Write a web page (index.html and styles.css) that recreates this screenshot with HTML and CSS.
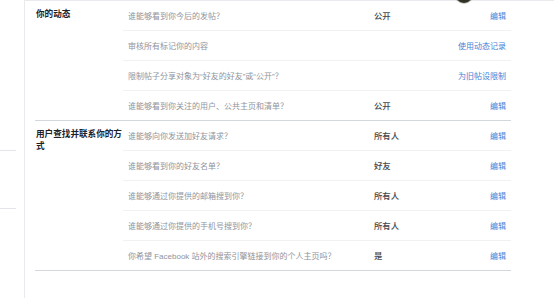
FILE: index.html
```html
<!DOCTYPE html>
<html lang="zh-CN">
<head>
<meta charset="utf-8">
<title>隐私设置</title>
<link rel="stylesheet" href="styles.css">
</head>
<body>
<div class="page">
  <aside class="side">
    <div class="side-sep"></div>
    <div class="side-sep"></div>
  </aside>
  <main class="content">
    <section class="group">
      <h3 class="g-title">你的动态</h3>
      <div class="rows">
        <div class="row"><span class="q">谁能够看到你今后的发帖？</span><span class="v">公开</span><a class="edit">编辑</a></div>
        <div class="row"><span class="q">审核所有标记你的内容</span><span class="v"></span><a class="edit">使用动态记录</a></div>
        <div class="row"><span class="q">限制帖子分享对象为“好友的好友”或“公开”？</span><span class="v"></span><a class="edit">为旧帖设限制</a></div>
        <div class="row"><span class="q">谁能够看到你关注的用户、公共主页和清单？</span><span class="v">公开</span><a class="edit">编辑</a></div>
      </div>
    </section>
    <section class="group">
      <h3 class="g-title">用户查找并联系你的方式</h3>
      <div class="rows">
        <div class="row"><span class="q">谁能够向你发送加好友请求？</span><span class="v">所有人</span><a class="edit">编辑</a></div>
        <div class="row"><span class="q">谁能够看到你的好友名单？</span><span class="v">好友</span><a class="edit">编辑</a></div>
        <div class="row"><span class="q">谁能够通过你提供的邮箱搜到你？</span><span class="v">所有人</span><a class="edit">编辑</a></div>
        <div class="row"><span class="q">谁能够通过你提供的手机号搜到你？</span><span class="v">所有人</span><a class="edit">编辑</a></div>
        <div class="row"><span class="q">你希望 Facebook 站外的搜索引擎链接到你的个人主页吗？</span><span class="v">是</span><a class="edit">编辑</a></div>
      </div>
    </section>
  </main>
  <span class="avatar"></span>
</div>
</body>
</html>
```

FILE: styles.css
```css
* { box-sizing: border-box; }
html, body { margin: 0; padding: 0; background: #ffffff; }
body {
  font-family: "Liberation Sans", "Noto Sans CJK SC", sans-serif;
  font-size: 8px;
  color: #90949c;
  width: 554px;
  height: 298px;
  overflow: hidden;
}
.page {
  position: relative;
  display: flex;
  height: 298px;
}
.side {
  width: 25px;
  flex: 0 0 25px;
  border-right: 1px solid #e9eaed;
  display: flex;
  flex-direction: column;
  padding-top: 150px;
  gap: 57px;
}
.side-sep {
  width: 16px;
  height: 1px;
  background: #e3e5e8;
}
.content {
  flex: 1;
  border-top: 1px solid #e9eaed;
  padding-left: 10px;
}
.group {
  width: 476px;
  display: grid;
  grid-template-columns: 88px 1fr;
  border-bottom: 1px solid #d3d6da;
}
.g-title {
  margin: 0;
  padding: 7px 0 0 1px;
  font-size: 8.6px;
  line-height: 12px;
  font-weight: bold;
  color: #1d2129;
}
.rows { display: flex; flex-direction: column; }
.row {
  display: flex;
  align-items: center;
  height: 30px;
  padding: 0 5px 1px;
  border-bottom: 1px solid #f0f1f3;
}
.row:last-child { border-bottom: none; height: 29px; }
.q { width: 246px; color: #90949c; white-space: nowrap; }
.v { flex: 1; color: #43474e; font-weight: 500; font-size: 8.4px; }
.edit { color: #4a7fd6; text-align: right; cursor: pointer; }
.avatar {
  position: absolute;
  left: 455px;
  top: -15px;
  width: 18px;
  height: 18px;
  border-radius: 50%;
  background: #2f3125;
  box-shadow: 0 0 0 1px #c9cbc4;
}
```
